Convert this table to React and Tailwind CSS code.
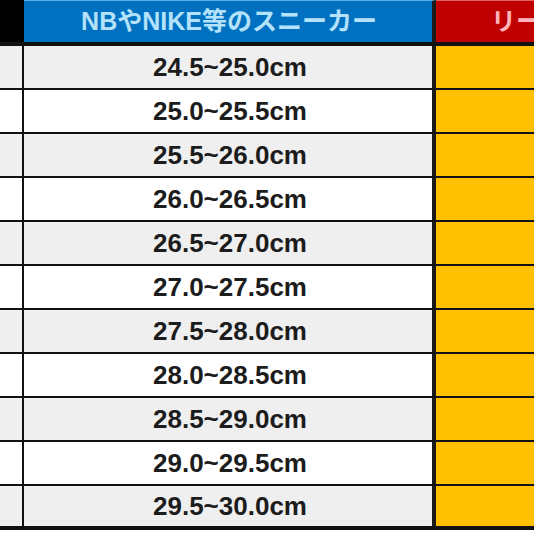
import React from "react";

const sizes = [
  "24.5~25.0cm",
  "25.0~25.5cm",
  "25.5~26.0cm",
  "26.0~26.5cm",
  "26.5~27.0cm",
  "27.0~27.5cm",
  "27.5~28.0cm",
  "28.0~28.5cm",
  "28.5~29.0cm",
  "29.0~29.5cm",
  "29.5~30.0cm",
];

const font = { fontFamily: '"Liberation Sans", "Noto Sans CJK JP", sans-serif' };

export default function App() {
  return (
    <div className="w-[534px] h-[534px] overflow-hidden bg-white" style={font}>
      <div className="flex h-[46px] border-b-4 border-[#111]">
        <div className="w-[24px] bg-black shrink-0" />
        <div className="w-[412px] shrink-0 bg-[#0070c0] border-r-4 border-[#1a1a1a] border-t border-t-[#5fb0e8] flex items-center justify-center">
          <span className="text-[25px] font-bold text-[#b3e2fa] leading-none pl-[2px]">NBやNIKE等のスニーカー</span>
        </div>
        <div className="flex-1 bg-[#c00000] border-t border-t-[#e06060] flex items-center pl-[55px] overflow-hidden">
          <span className="text-[25px] font-bold text-[#ffb4bc] leading-none whitespace-nowrap">リー</span>
        </div>
      </div>
      {sizes.map((s, i) => {
        const bg = i % 2 === 0 ? "bg-[#efefef]" : "bg-white";
        const last = i === sizes.length - 1;
        return (
          <div
            key={s}
            className={
              "flex h-[44px] border-[#111] " + (last ? "border-b-4" : "border-b-2")
            }
          >
            <div className={"w-[24px] shrink-0 border-r-2 border-[#111] " + bg} />
            <div
              className={
                "w-[412px] shrink-0 border-r-4 border-[#1a1a1a] flex items-center justify-center " + bg
              }
            >
              <span className="text-[26px] font-bold text-[#1c1c1c] leading-none pl-[4px]">{s}</span>
            </div>
            <div className="flex-1 bg-[#ffc000]" />
          </div>
        );
      })}
    </div>
  );
}
